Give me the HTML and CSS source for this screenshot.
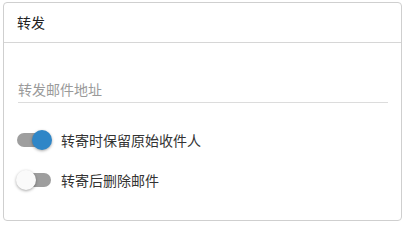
FILE: index.html
```html
<!DOCTYPE html>
<html lang="zh">
<head>
<meta charset="utf-8">
<link rel="stylesheet" href="styles.css">
</head>
<body>
<div class="card">
  <div class="card-header">转发</div>
  <div class="card-body">
    <div class="field"><span class="placeholder">转发邮件地址</span></div>
    <div class="switch-row">
      <span class="switch on"><span class="track"></span><span class="knob"></span></span>
      <span class="switch-label">转寄时保留原始收件人</span>
    </div>
    <div class="switch-row">
      <span class="switch"><span class="track"></span><span class="knob"></span></span>
      <span class="switch-label">转寄后删除邮件</span>
    </div>
  </div>
</div>
</body>
</html>
```
FILE: styles.css
```css
html, body { margin: 0; padding: 0; background: #fff; }
body {
  font-family: "Noto Sans CJK SC", "Noto Sans", sans-serif;
  font-size: 14px;
  color: #333;
}
.card {
  margin: 2px 0 0 3px;
  width: 397px;
  height: 217px;
  border: 1px solid #cfcfcf;
  border-radius: 4px;
  display: flex;
  flex-direction: column;
}
.card-header {
  height: 39px;
  line-height: 39px;
  padding-left: 13px;
  border-bottom: 1px solid #d6d6d6;
  color: #222;
  font-size: 14px;
}
.card-body {
  padding: 34px 13px 0 14px;
  display: flex;
  flex-direction: column;
}
.field {
  height: 25px;
  line-height: 24px;
  border-bottom: 1px solid #dcdcdc;
  margin-bottom: 17px;
}
.placeholder { color: #9a9a9a; }
.switch-row {
  height: 40px;
  display: flex;
  align-items: center;
}
.switch {
  position: relative;
  width: 34px;
  height: 20px;
  margin-left: -1px;
  margin-right: 10px;
  flex: none;
}
.track {
  position: absolute;
  left: 0; top: 3px;
  width: 34px; height: 14px;
  border-radius: 7px;
  background: #9e9e9e;
}
.knob {
  position: absolute;
  top: 0; left: -1px;
  width: 20px; height: 20px;
  border-radius: 50%;
  background: #fafafa;
  box-shadow: 0 1px 3px rgba(0,0,0,0.35);
}
.switch.on .knob {
  left: 15px;
  background: #2f86c7;
}
.switch-label { color: #333; }
```
